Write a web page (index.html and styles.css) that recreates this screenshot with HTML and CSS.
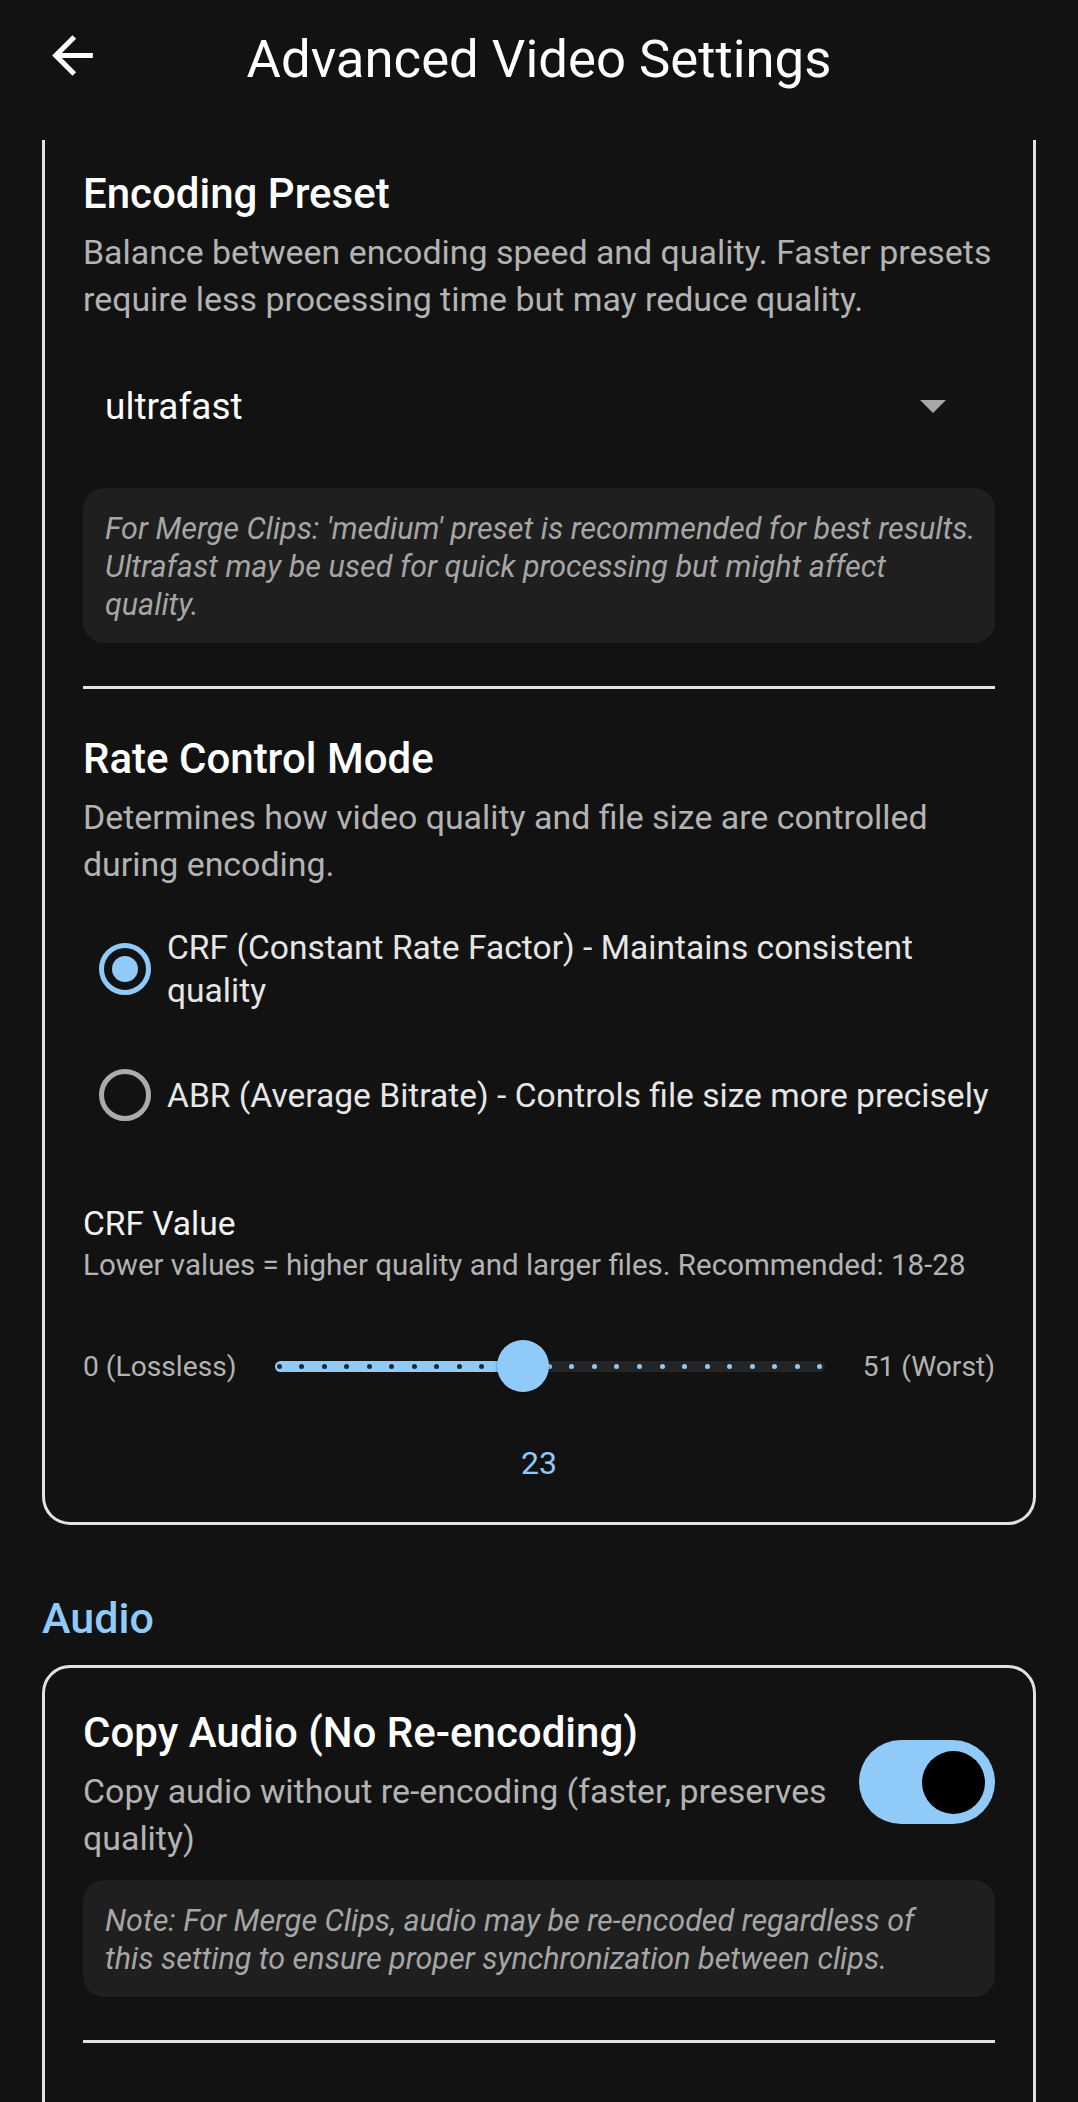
FILE: index.html
```html
<!DOCTYPE html>
<html lang="en">
<head>
<meta charset="utf-8">
<title>Advanced Video Settings</title>
<link rel="stylesheet" href="styles.css">
</head>
<body>
<div class="screen">
  <header class="appbar">
    <button class="back" aria-label="Back">
      <svg viewBox="0 0 24 24" aria-hidden="true"><path d="M20 11H7.83l5.59-5.59L12 4l-8 8 8 8 1.41-1.41L7.83 13H20v-2z"/></svg>
    </button>
    <h1 class="title">Advanced Video Settings</h1>
    <span class="appbar-spacer"></span>
  </header>

  <main class="content">
    <section class="card card-cut">
      <h2 class="setting-title">Encoding Preset</h2>
      <p class="setting-desc">Balance between encoding speed and quality. Faster presets require less processing time but may reduce quality.</p>
      <div class="select">
        <span class="select-value">ultrafast</span>
        <span class="caret"></span>
      </div>
      <p class="note">For Merge Clips: 'medium' preset is recommended for best results.<br>Ultrafast may be used for quick processing but might affect<br>quality.</p>
      <hr class="divider">

      <h2 class="setting-title">Rate Control Mode</h2>
      <p class="setting-desc">Determines how video quality and file size are controlled during encoding.</p>
      <div class="radio-group">
        <div class="radio-row">
          <span class="radio checked"></span>
          <span class="radio-label">CRF (Constant Rate Factor) - Maintains consistent quality</span>
        </div>
        <div class="radio-row">
          <span class="radio"></span>
          <span class="radio-label">ABR (Average Bitrate) - Controls file size more precisely</span>
        </div>
      </div>

      <div class="slider-title">CRF Value</div>
      <div class="slider-hint">Lower values = higher quality and larger files. Recommended: 18-28</div>
      <div class="slider-row">
        <span class="slider-end">0 (Lossless)</span>
        <div class="slider" style="--value:45.1%">
          <div class="track">
            <div class="dots">
              <span class="dot on"></span><span class="dot on"></span><span class="dot on"></span><span class="dot on"></span><span class="dot on"></span>
              <span class="dot on"></span><span class="dot on"></span><span class="dot on"></span><span class="dot on"></span><span class="dot on"></span>
              <span class="dot on"></span><span class="dot"></span><span class="dot"></span><span class="dot"></span><span class="dot"></span>
              <span class="dot"></span><span class="dot"></span><span class="dot"></span><span class="dot"></span><span class="dot"></span>
              <span class="dot"></span><span class="dot"></span><span class="dot"></span><span class="dot"></span><span class="dot"></span>
            </div>
          </div>
          <span class="thumb"></span>
        </div>
        <span class="slider-end">51 (Worst)</span>
      </div>
      <div class="slider-value">23</div>
    </section>

    <h3 class="section-label">Audio</h3>

    <section class="card card-audio">
      <div class="toggle-row">
        <div class="toggle-text">
          <h2 class="setting-title">Copy Audio (No Re-encoding)</h2>
          <p class="setting-desc">Copy audio without re-encoding (faster, preserves quality)</p>
        </div>
        <span class="switch"><span class="switch-thumb"></span></span>
      </div>
      <p class="note">Note: For Merge Clips, audio may be re-encoded regardless of<br>this setting to ensure proper synchronization between clips.</p>
      <hr class="divider">
    </section>
  </main>
</div>
</body>
</html>
```

FILE: styles.css
```css
* { box-sizing: border-box; }

html, body {
  margin: 0;
  padding: 0;
  background: #121212;
}

body {
  font-family: Roboto, "Noto Sans", "Liberation Sans", sans-serif;
  color: #ffffff;
}

.screen {
  width: 1078px;
  height: 2102px;
  overflow: hidden;
  background: #121212;
}

/* App bar */
.appbar {
  height: 140px;
  padding: 25px 42px 0;
  display: grid;
  grid-template-columns: 1fr auto 1fr;
  align-items: start;
}

.back {
  width: 61px;
  height: 61px;
  padding: 0;
  border: 0;
  background: transparent;
  justify-self: start;
}

.back svg {
  display: block;
  width: 61px;
  height: 61px;
  fill: #ffffff;
}

.title {
  margin: 4px 0 0;
  font-size: 52.7px;
  line-height: 60px;
  font-weight: 400;
  color: #ffffff;
  white-space: nowrap;
}

/* Content */
.content {
  padding: 0 42px;
}

.card {
  border: 3px solid #e2e2e2;
  border-radius: 28px;
  padding: 0 38px;
}

.card-cut {
  border-top: 0;
  border-radius: 0 0 28px 28px;
  padding-top: 29px;
  padding-bottom: 37px;
}

.card-audio {
  margin-top: 22px;
  padding-top: 40px;
  padding-bottom: 200px;
}

.setting-title {
  margin: 0;
  font-size: 42px;
  line-height: 50px;
  font-weight: 500;
  color: #ffffff;
}

.setting-desc {
  margin: 10px 0 0;
  font-size: 33.9px;
  line-height: 47px;
  font-weight: 400;
  color: #b3b3b3;
}

/* Dropdown */
.select {
  margin-top: 10px;
  height: 146px;
  display: flex;
  align-items: center;
  justify-content: space-between;
  padding: 0 49px 0 22px;
}

.select-value {
  font-size: 37px;
  color: #ffffff;
}

.caret {
  width: 0;
  height: 0;
  border-left: 13px solid transparent;
  border-right: 13px solid transparent;
  border-top: 13px solid #a8a8a8;
}

/* Note box */
.note {
  margin: 9px 0 0;
  padding: 22px 12px 19px 22px;
  background: #1f1f1f;
  border-radius: 21px;
  font-size: 30.5px;
  line-height: 38px;
  font-style: italic;
  color: #a6a6a6;
  white-space: nowrap;
}

.divider {
  margin: 43px 0 45px;
  border: 0;
  height: 3px;
  background: #e2e2e2;
}

/* Radios */
.radio-group {
  margin-top: 18px;
}

.radio-row {
  display: flex;
  align-items: center;
  gap: 16px;
  min-height: 126px;
  padding-left: 16px;
}

.radio {
  flex: none;
  width: 52px;
  height: 52px;
  border: 5px solid #ababab;
  border-radius: 50%;
  display: grid;
  place-items: center;
}

.radio.checked {
  border-color: #90caf9;
}

.radio.checked::after {
  content: "";
  width: 26px;
  height: 26px;
  border-radius: 50%;
  background: #90caf9;
}

.radio-label {
  font-size: 33.6px;
  line-height: 43px;
  color: #e6e6e6;
}

/* Slider */
.slider-title {
  margin-top: 44px;
  font-size: 33.5px;
  line-height: 43px;
  color: #f2f2f2;
}

.slider-hint {
  margin-top: 1px;
  font-size: 29.5px;
  line-height: 38px;
  color: #b3b3b3;
}

.slider-row {
  margin-top: 56px;
  height: 52px;
  display: flex;
  align-items: center;
}

.slider-end {
  font-size: 28.2px;
  color: #b3b3b3;
  white-space: nowrap;
}

.slider {
  position: relative;
  flex: 1;
  height: 52px;
  margin: 0 38px;
  display: flex;
  align-items: center;
}

.track {
  width: 100%;
  height: 11px;
  border-radius: 6px;
  background: linear-gradient(to right, #90caf9 var(--value), #222426 var(--value));
}

.dots {
  height: 100%;
  display: flex;
  align-items: center;
  justify-content: space-between;
  padding: 0 2.2px;
}

.dot {
  width: 5px;
  height: 5px;
  border-radius: 50%;
  background: #90caf9;
}

.dot.on {
  background: #1b2a35;
}

.thumb {
  position: absolute;
  left: var(--value);
  top: 50%;
  width: 52px;
  height: 52px;
  border-radius: 50%;
  background: #90caf9;
  transform: translate(-50%, -50%);
  box-shadow: 0 1px 3px rgba(0, 0, 0, 0.45);
}

.slider-value {
  margin-top: 50px;
  text-align: center;
  font-size: 32px;
  line-height: 43px;
  color: #90caf9;
}

/* Audio section */
.section-label {
  margin: 68px 0 0;
  font-size: 43px;
  line-height: 50px;
  font-weight: 500;
  color: #90caf9;
}

.toggle-row {
  display: flex;
  align-items: center;
  gap: 22px;
}

.toggle-text {
  flex: 1;
  min-width: 0;
}

.switch {
  flex: none;
  width: 136px;
  height: 84px;
  border-radius: 42px;
  background: #90caf9;
  display: flex;
  align-items: center;
  justify-content: flex-end;
  padding-right: 10px;
  margin-top: -6px;
}

.switch-thumb {
  width: 63px;
  height: 63px;
  border-radius: 50%;
  background: #000000;
}

.card-audio .note {
  margin-top: 18px;
}
```
